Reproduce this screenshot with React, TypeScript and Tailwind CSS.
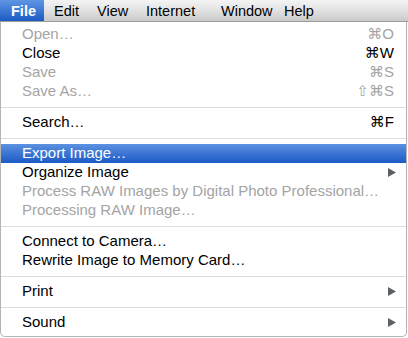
import React from "react";

type Item =
  | { type: "sep" }
  | { type: "item"; label: string; shortcut?: string; disabled?: boolean; submenu?: boolean; active?: boolean };

const items: Item[] = [
  { type: "item", label: "Open…", shortcut: "⌘O", disabled: true },
  { type: "item", label: "Close", shortcut: "⌘W" },
  { type: "item", label: "Save", shortcut: "⌘S", disabled: true },
  { type: "item", label: "Save As…", shortcut: "⇧⌘S", disabled: true },
  { type: "sep" },
  { type: "item", label: "Search…", shortcut: "⌘F" },
  { type: "sep" },
  { type: "item", label: "Export Image…", active: true },
  { type: "item", label: "Organize Image", submenu: true },
  { type: "item", label: "Process RAW Images by Digital Photo Professional…", disabled: true },
  { type: "item", label: "Processing RAW Image…", disabled: true },
  { type: "sep" },
  { type: "item", label: "Connect to Camera…" },
  { type: "item", label: "Rewrite Image to Memory Card…" },
  { type: "sep" },
  { type: "item", label: "Print", submenu: true },
  { type: "sep" },
  { type: "item", label: "Sound", submenu: true },
];

const font = { fontFamily: '"Liberation Sans", "DejaVu Sans", sans-serif' };

function Arrow() {
  return (
    <svg width="8" height="9" viewBox="0 0 8 9" className="block">
      <path d="M0 0 L8 4.5 L0 9 Z" fill="#5c6166" />
    </svg>
  );
}

export default function App() {
  return (
    <div className="w-[408px] h-[338px] bg-white overflow-hidden text-black" style={font}>
      {/* Menu bar */}
      <div className="h-[22px] flex items-stretch bg-gradient-to-b from-[#f4f4f4] via-[#e2e2e2] to-[#c9c9c9] border-b border-[#9d9d9d] text-[14.5px] leading-[22px]">
        <div className="w-[44px] pl-[11px] font-bold text-white bg-gradient-to-b from-[#5f95e2] to-[#1a5ac4]">File</div>
        <div className="w-[43px] pl-[10px]">Edit</div>
        <div className="w-[49px] pl-[10px]">View</div>
        <div className="w-[75px] pl-[10px]">Internet</div>
        <div className="w-[63px] pl-[10px]">Window</div>
        <div className="pl-[10px]">Help</div>
      </div>
      {/* Menu */}
      <div className="w-[407px] h-[315px] bg-white border-l border-r border-b border-[#b4b4b4] rounded-b-[5px] pt-[3px] pb-[5px]">
        {items.map((it, i) =>
          it.type === "sep" ? (
            <div key={i} className="h-[12px] flex items-center">
              <div className="h-px w-full bg-[#dcdcdc]" />
            </div>
          ) : (
            <div
              key={i}
              className={
                "h-[19px] flex items-center pl-[21px] pr-[12px] text-[15px] " +
                (it.active
                  ? "bg-gradient-to-b from-[#5b91e0] to-[#1a59c6] text-white"
                  : it.disabled
                  ? "text-[#a4a4a4]"
                  : "text-black")
              }
            >
              <span className="flex-1 whitespace-nowrap">{it.label}</span>
              {it.shortcut && <span className="whitespace-nowrap">{it.shortcut}</span>}
              {it.submenu && (
                <span className="mr-[-2px]">
                  <Arrow />
                </span>
              )}
            </div>
          )
        )}
      </div>
    </div>
  );
}
